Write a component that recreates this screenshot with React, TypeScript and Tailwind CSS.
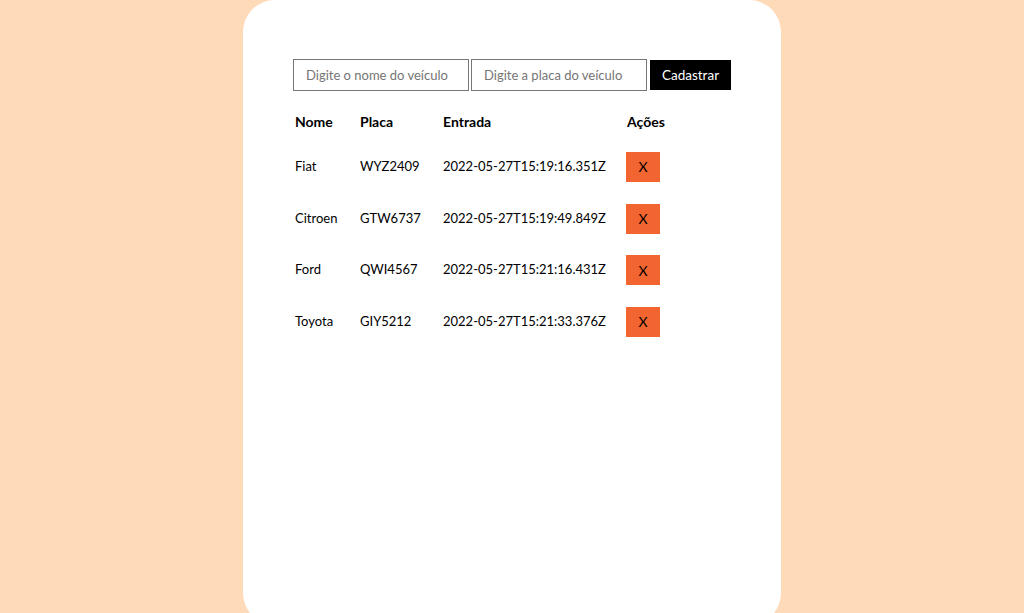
import { useState } from 'react';

interface Vehicle {
  name: string;
  plate: string;
  entry: string;
}

const initial: Vehicle[] = [
  { name: 'Fiat', plate: 'WYZ2409', entry: '2022-05-27T15:19:16.351Z' },
  { name: 'Citroen', plate: 'GTW6737', entry: '2022-05-27T15:19:49.849Z' },
  { name: 'Ford', plate: 'QWI4567', entry: '2022-05-27T15:21:16.431Z' },
  { name: 'Toyota', plate: 'GIY5212', entry: '2022-05-27T15:21:33.376Z' },
];

export default function App() {
  const [vehicles, setVehicles] = useState<Vehicle[]>(initial);
  const [name, setName] = useState('');
  const [plate, setPlate] = useState('');

  const add = () => {
    if (!name || !plate) return;
    setVehicles([...vehicles, { name, plate, entry: new Date().toISOString() }]);
    setName('');
    setPlate('');
  };

  return (
    <div className="h-[613px] overflow-hidden bg-[#ffdab9] flex justify-center font-['Lato',_sans-serif] text-[13px] text-black">
      <main className="w-[538px] h-[625px] shrink-0 bg-white rounded-[32px] pl-[50px] pt-[59px]">
        {/* Form */}
        <div className="flex items-center">
          <input
            value={name}
            onChange={e => setName(e.target.value)}
            placeholder="Digite o nome do veículo"
            className="w-[176px] h-[32px] border border-[#767676] px-[12px] outline-none placeholder:text-[#757575]"
          />
          <input
            value={plate}
            onChange={e => setPlate(e.target.value)}
            placeholder="Digite a placa do veículo"
            className="w-[176px] h-[32px] ml-[2px] border border-[#767676] px-[12px] outline-none placeholder:text-[#757575]"
          />
          <button
            onClick={add}
            className="ml-[3px] h-[30px] w-[81px] bg-black text-white text-[13.5px]"
          >
            Cadastrar
          </button>
        </div>

        {/* Table */}
        <div className="mt-[16px]">
          <div className="grid grid-cols-[65px_83px_183px_1fr] h-[29px] items-center font-bold text-[14px]">
            <span className="pl-[2px]">Nome</span>
            <span className="pl-[2px]">Placa</span>
            <span className="pl-[2px]">Entrada</span>
            <span className="pl-[3px]">Ações</span>
          </div>
          <div className="mt-[5px]">
            {vehicles.map((v, i) => (
              <div key={i} className="grid grid-cols-[65px_83px_183px_1fr] h-[51.7px] items-center">
                <span className="pl-[2px]">{v.name}</span>
                <span className="pl-[2px]">{v.plate}</span>
                <span className="pl-[2px]">{v.entry}</span>
                <span className="pl-[2px]">
                  <button
                    onClick={() => setVehicles(vehicles.filter((_, j) => j !== i))}
                    className="w-[34px] h-[30px] bg-[#f26430] text-black text-[14px]"
                  >
                    X
                  </button>
                </span>
              </div>
            ))}
          </div>
        </div>
      </main>
    </div>
  );
}
